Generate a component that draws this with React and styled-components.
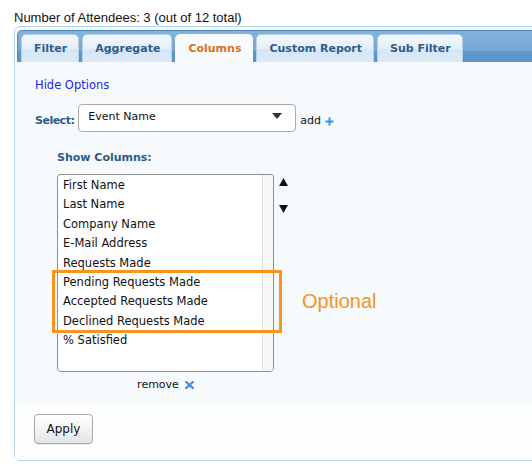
import React from 'react';
import styled, {createGlobalStyle} from 'styled-components';

const GlobalStyle = createGlobalStyle`
  body {
    margin: 0;
    background: #ffffff;
    overflow: hidden;
  }
`;

const UI_FONT = `"DejaVu Sans", "Noto Sans", sans-serif`;

const Page = styled.div`
  width: 532px;
  height: 476px;
  font-family: ${UI_FONT};
`;

const Summary = styled.div`
  padding: 10px 0 0 14px;
  height: 16px;
  line-height: 16px;
  font-family: "Liberation Sans", Arial, sans-serif;
  font-size: 13px;
  color: #111;
`;

const Panel = styled.div`
  margin-left: 14px;
  width: 560px;
  height: 433px;
  border: 1px solid #b9d5ec;
  border-radius: 6px;
  background: #fcfdfd;
  display: flex;
  flex-direction: column;
`;

const TabBar = styled.div`
  margin: 3px 0 0 2px;
  height: 32px;
  box-sizing: border-box;
  display: flex;
  align-items: flex-end;
  gap: 3px;
  padding-left: 3px;
  border: 1px solid #4f89c2;
  border-bottom: none;
  border-radius: 5px 0 0 0;
  background: linear-gradient(to bottom, #84b2da 0%, #74a7d3 65%, #5e97ca 66%, #5a94c8 100%);
`;

const Tab = styled.div`
  height: 28px;
  box-sizing: border-box;
  padding: 0 11px 0 12px;
  display: flex;
  align-items: center;
  border: 1px solid ${p => (p.$active ? '#f4f8fb' : '#b5d0ea')};
  border-bottom: none;
  border-radius: 5px 5px 0 0;
  background: ${p => (p.$active
    ? '#f8fbfc'
    : 'linear-gradient(to bottom, #f1f7fd 0%, #e6f0fa 50%, #d5e6f6 52%, #dceaf8 100%)')};
  color: ${p => (p.$active ? '#df6f1a' : '#2e5d8c')};
  font-size: 11px;
  font-weight: bold;
  white-space: nowrap;
`;

const Content = styled.div`
  height: 342px;
  box-sizing: border-box;
  padding: 16px 0 0 20px;
  background: #f7fafc;
`;

const HideLink = styled.a`
  display: block;
  line-height: 14px;
  font-size: 11.5px;
  color: #2424e6;
  text-decoration: none;
`;

const SelectRow = styled.div`
  margin-top: 12px;
  display: flex;
  align-items: flex-end;
  gap: 4px;
`;

const FieldLabel = styled.span`
  display: block;
  line-height: 14px;
  margin-bottom: ${p => (p.$inline ? '4px' : '0')};
  font-size: 11px;
  font-weight: bold;
  letter-spacing: ${p => (p.$inline ? '-0.5px' : '0')};
  color: #2c5a89;
`;

const Dropdown = styled.div`
  width: 218px;
  height: 28px;
  box-sizing: border-box;
  border: 1px solid #a8a8a8;
  border-radius: 4px;
  background: #ffffff;
  display: flex;
  align-items: center;
  justify-content: space-between;
  padding: 0 13px 4px 9px;
  font-size: 11px;
  color: #111;
`;

const AddText = styled.span`
  line-height: 14px;
  margin-bottom: 4px;
  font-size: 11px;
  color: #111;
  display: flex;
  align-items: center;
  gap: 4px;
`;

const ColumnsBlock = styled.div`
  margin-top: 19px;
  padding-left: 22px;
`;

const ListArea = styled.div`
  position: relative;
  margin-top: 9px;
  display: flex;
  align-items: flex-start;
  gap: 5px;
`;

const ListBox = styled.div`
  width: 217px;
  height: 198px;
  box-sizing: border-box;
  border: 1px solid #8d8d8d;
  border-radius: 3px 3px 4px 4px;
  background: #ffffff;
  display: flex;
  overflow: hidden;
`;

const Items = styled.ul`
  flex: 1;
  margin: 0;
  padding: 1px 0 0 5px;
  list-style: none;
`;

const Item = styled.li`
  height: 19.4px;
  line-height: 19.4px;
  font-size: 11.5px;
  color: #111;
  white-space: nowrap;
`;

const ScrollTrack = styled.div`
  width: 10px;
  border-left: 1px solid #e2e2e2;
  background: #f6f6f6;
`;

const Arrows = styled.div`
  display: flex;
  flex-direction: column;
  gap: 19px;
  padding-top: 4px;
`;

const Highlight = styled.div`
  position: absolute;
  left: -5px;
  top: 96px;
  width: 230px;
  height: 63px;
  box-sizing: border-box;
  border: 3px solid #f7931e;
  pointer-events: none;
`;

const Note = styled.span`
  position: absolute;
  left: 245px;
  top: 115px;
  line-height: 24px;
  font-family: "Liberation Sans", Arial, sans-serif;
  font-size: 20px;
  color: #f7931e;
`;

const RemoveRow = styled.div`
  width: 217px;
  margin-top: 6px;
  line-height: 14px;
  font-size: 11px;
  color: #111;
  display: flex;
  justify-content: center;
  align-items: center;
  gap: 6px;
`;

const Footer = styled.div`
  flex: 1;
  padding: 10px 0 0 19px;
  background: #fdfefe;
`;

const Button = styled.button`
  width: 59px;
  height: 30px;
  border: 1px solid #a9a9a9;
  border-radius: 4px;
  background: linear-gradient(to bottom, #ffffff 0%, #f3f3f3 50%, #e4e4e4 100%);
  box-shadow: 0 1px 1px rgba(0, 0, 0, 0.08);
  font-family: ${UI_FONT};
  font-size: 12px;
  color: #111;
  padding: 0;
`;

const tabs = ['Filter', 'Aggregate', 'Columns', 'Custom Report', 'Sub Filter'];

const columns = [
  'First Name',
  'Last Name',
  'Company Name',
  'E-Mail Address',
  'Requests Made',
  'Pending Requests Made',
  'Accepted Requests Made',
  'Declined Requests Made',
  '% Satisfied',
];

const Caret = () => (
  <svg width="10" height="6" viewBox="0 0 10 6">
    <path d="M0 0 H10 L5 6 Z" fill="#333" />
  </svg>
);

const Plus = () => (
  <svg width="9" height="9" viewBox="0 0 9 9">
    <path d="M4.5 0.5 V8.5 M0.5 4.5 H8.5" stroke="#3b8fe0" strokeWidth="2" />
  </svg>
);

const Cross = () => (
  <svg width="9" height="8" viewBox="0 0 9 8">
    <path d="M1 0.8 L8 7.2 M8 0.8 L1 7.2" stroke="#3d8ee2" strokeWidth="2.2" strokeLinecap="round" />
  </svg>
);

const Triangle = ({down}) => (
  <svg width="9" height="8" viewBox="0 0 9 8">
    <path d={down ? 'M0 0 H9 L4.5 8 Z' : 'M4.5 0 L9 8 H0 Z'} fill="#111" />
  </svg>
);

export default function App() {
  return (
    <Page>
      <GlobalStyle />
      <Summary>Number of Attendees: 3 (out of 12 total)</Summary>
      <Panel>
        <TabBar>
          {tabs.map(t => (
            <Tab key={t} $active={t === 'Columns'}>{t}</Tab>
          ))}
        </TabBar>
        <Content>
          <HideLink href="#">Hide Options</HideLink>
          <SelectRow>
            <FieldLabel $inline>Select:</FieldLabel>
            <Dropdown>
              <span>Event Name</span>
              <Caret />
            </Dropdown>
            <AddText>add <Plus /></AddText>
          </SelectRow>
          <ColumnsBlock>
            <FieldLabel>Show Columns:</FieldLabel>
            <ListArea>
              <ListBox>
                <Items>
                  {columns.map(c => <Item key={c}>{c}</Item>)}
                </Items>
                <ScrollTrack />
              </ListBox>
              <Arrows>
                <Triangle />
                <Triangle down />
              </Arrows>
              <Highlight />
              <Note>Optional</Note>
            </ListArea>
            <RemoveRow>remove <Cross /></RemoveRow>
          </ColumnsBlock>
        </Content>
        <Footer>
          <Button>Apply</Button>
        </Footer>
      </Panel>
    </Page>
  );
}
